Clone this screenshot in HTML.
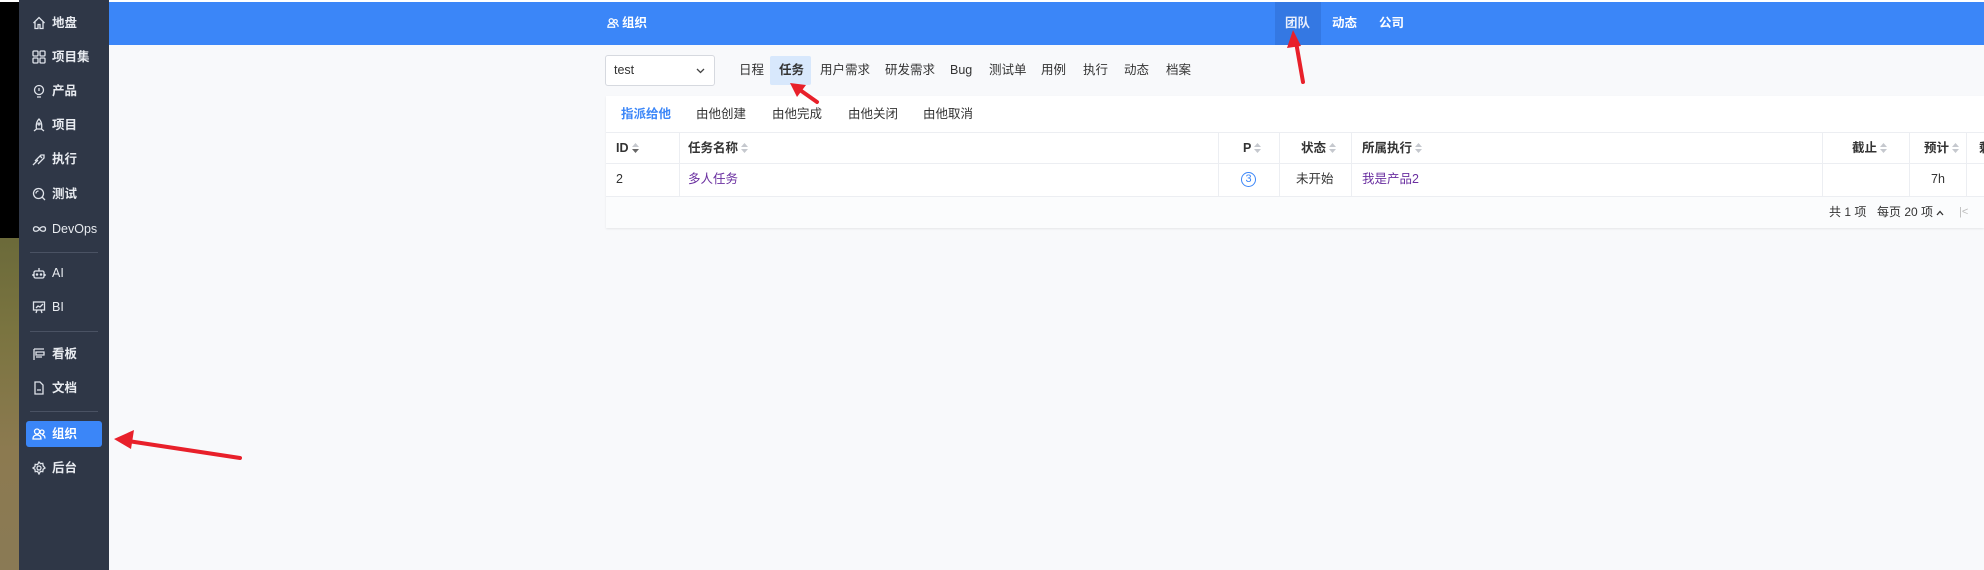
<!DOCTYPE html>
<html><head><meta charset="utf-8"><style>
*{margin:0;padding:0;box-sizing:border-box}
body{width:1984px;height:570px;overflow:hidden;position:relative;background:#f8f9fb;font-family:"Liberation Sans","Noto Sans CJK SC",sans-serif;font-size:13px;line-height:16px;color:#333}
.a{position:absolute;white-space:nowrap;line-height:16px}
#left{left:0;top:0;width:19px;height:570px;background:linear-gradient(180deg,#000 0,#000 238px,#6b6a3a 238px,#7a7440 330px,#8c7a50 450px,#8a7a55 570px)}
#side{left:19px;top:0;width:90px;height:570px;background:#2f3747}
.si{position:absolute;left:0;width:90px;height:26px;color:#e8ebf0;font-weight:bold;font-size:12.5px;line-height:26px;padding-left:33px}
.si svg{position:absolute;left:13px;top:6px}
.dv{position:absolute;left:11px;width:68px;height:1px;background:#4a5263}
#hdr{left:109px;top:2px;width:1875px;height:43px;background:#3b86f8}
.hw{color:#fff;font-weight:bold;font-size:12.5px}
.tab{font-size:12.5px;color:#333}
.th{font-weight:bold;font-size:12.5px;color:#333}
.vl{position:absolute;top:132px;height:64px;width:1px;background:#eceef2}
.sort{display:inline-block;width:7px;margin-left:3px;vertical-align:-1px}
</style></head><body>
<div class="a" id="left"></div>
<div class="a" style="left:0;top:0;width:1984px;height:2px;background:#fff"></div>
<div class="a" id="side">
 <div class="si" style="top:10px"><svg width="14" height="14" viewBox="0 0 14 14" fill="none" stroke="#dfe3ea" stroke-width="1.3"><path d="M1.5 7L7 1.5 12.5 7M3 6v6.5h3v-4h2v4h3V6"/></svg>地盘</div>
 <div class="si" style="top:44px"><svg width="14" height="14" viewBox="0 0 14 14" fill="none" stroke="#dfe3ea" stroke-width="1.3"><rect x="1" y="1" width="5" height="5" rx="1"/><rect x="8" y="1" width="5" height="5" rx="1"/><rect x="1" y="8" width="5" height="5" rx="1"/><rect x="8" y="8" width="5" height="5" rx="1"/></svg>项目集</div>
 <div class="si" style="top:78px"><svg width="14" height="14" viewBox="0 0 14 14" fill="none" stroke="#dfe3ea" stroke-width="1.3"><circle cx="7" cy="6" r="4.5"/><path d="M5 13h4M7 4v3"/></svg>产品</div>
 <div class="si" style="top:112px"><svg width="14" height="14" viewBox="0 0 14 14" fill="none" stroke="#dfe3ea" stroke-width="1.3"><path d="M7 1C4 4 4 8 4.5 11h5C10 8 10 4 7 1zM4.5 11L2 13M9.5 11L12 13"/><circle cx="7" cy="6" r="1"/></svg>项目</div>
 <div class="si" style="top:146px"><svg width="14" height="14" viewBox="0 0 14 14" fill="none" stroke="#dfe3ea" stroke-width="1.3"><path d="M1 13l5-5M3 9l6-6 3 0 0 3-6 6M8 4l2 2"/></svg>执行</div>
 <div class="si" style="top:181px"><svg width="14" height="14" viewBox="0 0 14 14" fill="none" stroke="#dfe3ea" stroke-width="1.3"><circle cx="6.5" cy="6.5" r="5"/><path d="M10 10l3 3M4 6.5a2.5 2.5 0 0 1 2.5-2.5"/></svg>测试</div>
 <div class="si" style="top:216px;font-weight:normal"><svg width="15" height="14" viewBox="0 0 15 14" fill="none" stroke="#dfe3ea" stroke-width="1.3"><path d="M7.5 7c-2-3-6-3-6 0s4 3 6 0 6-3 6 0-4 3-6 0z"/></svg>DevOps</div>
 <div class="dv" style="top:252px"></div>
 <div class="si" style="top:260px;font-weight:normal"><svg width="14" height="14" viewBox="0 0 14 14" fill="none" stroke="#dfe3ea" stroke-width="1.3"><rect x="2" y="5" width="10" height="7" rx="1.5"/><path d="M7 5V2M1 8v2M13 8v2"/><circle cx="5" cy="8.5" r=".6"/><circle cx="9" cy="8.5" r=".6"/></svg>AI</div>
 <div class="si" style="top:294px;font-weight:normal"><svg width="14" height="14" viewBox="0 0 14 14" fill="none" stroke="#dfe3ea" stroke-width="1.3"><rect x="1.5" y="2" width="11" height="8"/><path d="M4 8l2-2 2 1 3-3M5 10l-1 3M9 10l1 3"/></svg>BI</div>
 <div class="dv" style="top:331px"></div>
 <div class="si" style="top:341px"><svg width="14" height="14" viewBox="0 0 14 14" fill="none" stroke="#dfe3ea" stroke-width="1.3"><path d="M2 2h10M2 2v11M4 5h8v3H4zM4 10h6"/></svg>看板</div>
 <div class="si" style="top:375px"><svg width="14" height="14" viewBox="0 0 14 14" fill="none" stroke="#dfe3ea" stroke-width="1.3"><path d="M3 1h5l3 3v9H3zM5 9h4"/></svg>文档</div>
 <div class="dv" style="top:411px"></div>
 <div class="si" style="top:421px;left:7px;width:76px;background:#3b86f8;border-radius:3px;padding-left:26px;color:#fff"><svg style="left:6px" width="14" height="14" viewBox="0 0 14 14" fill="none" stroke="#fff" stroke-width="1.3"><circle cx="5" cy="4.5" r="2.5"/><circle cx="10" cy="5" r="2"/><path d="M1 12c0-3 2-4 4-4s4 1 4 4zM10 8c2 0 3 1 3 3.5"/></svg>组织</div>
 <div class="si" style="top:455px"><svg width="14" height="14" viewBox="0 0 14 14" fill="none" stroke="#dfe3ea" stroke-width="1.3"><circle cx="7" cy="7" r="2"/><path d="M7 1l1.5 1.7 2.3-.3.3 2.3L13 7l-1.9 1.3-.3 2.3-2.3-.3L7 13l-1.5-2.7-2.3.3-.3-2.3L1 7l1.9-1.3.3-2.3 2.3.3z"/></svg>后台</div>
</div>
<div class="a" id="hdr"></div>
<svg class="a" style="left:607px;top:17px" width="12" height="12" viewBox="0 0 14 14" fill="none" stroke="#fff" stroke-width="1.4"><circle cx="5" cy="4.5" r="2.5"/><circle cx="10" cy="5" r="2"/><path d="M1 12c0-3 2-4 4-4s4 1 4 4zM10 8c2 0 3 1 3 3.5"/></svg>
<div class="a hw" style="left:622px;top:15px">组织</div>
<div class="a" style="left:1275px;top:2px;width:46px;height:43px;background:#3478e3"></div>
<div class="a hw" style="left:1285px;top:15px;color:#e8eefc">团队</div>
<div class="a hw" style="left:1332px;top:15px">动态</div>
<div class="a hw" style="left:1379px;top:15px">公司</div>

<div class="a" style="left:605px;top:55px;width:110px;height:31px;background:#fff;border:1px solid #d6d9df;border-radius:3px"></div>
<div class="a tab" style="left:614px;top:62px">test</div>
<svg class="a" style="left:696px;top:68px" width="9" height="6" viewBox="0 0 9 6" fill="none" stroke="#444" stroke-width="1.3"><path d="M1 1l3.5 3.5L8 1"/></svg>
<div class="a tab" style="left:739px;top:62px">日程</div>
<div class="a" style="left:770px;top:56px;width:41px;height:29px;background:#d8e8fc;border-radius:2px"></div>
<div class="a tab" style="left:779px;top:62px;font-weight:bold">任务</div>
<div class="a tab" style="left:820px;top:62px">用户需求</div>
<div class="a tab" style="left:885px;top:62px">研发需求</div>
<div class="a tab" style="left:950px;top:62px">Bug</div>
<div class="a tab" style="left:989px;top:62px">测试单</div>
<div class="a tab" style="left:1041px;top:62px">用例</div>
<div class="a tab" style="left:1083px;top:62px">执行</div>
<div class="a tab" style="left:1124px;top:62px">动态</div>
<div class="a tab" style="left:1166px;top:62px">档案</div>

<div class="a" style="left:606px;top:96px;width:1378px;height:132px;background:#fff;box-shadow:0 1px 2px rgba(0,0,0,.08)"></div>
<div class="a tab" style="left:621px;top:106px;color:#3b86f8;font-weight:bold">指派给他</div>
<div class="a tab" style="left:696px;top:106px">由他创建</div>
<div class="a tab" style="left:772px;top:106px">由他完成</div>
<div class="a tab" style="left:848px;top:106px">由他关闭</div>
<div class="a tab" style="left:923px;top:106px">由他取消</div>
<div class="a" style="left:606px;top:132px;width:1378px;height:1px;background:#eceef2"></div>
<div class="a" style="left:606px;top:163px;width:1378px;height:1px;background:#eceef2"></div>
<div class="a" style="left:606px;top:196px;width:1378px;height:1px;background:#eceef2"></div>
<div class="a" style="left:606px;top:197px;width:1378px;height:31px;background:#fbfcfd"></div>
<div class="vl" style="left:679px"></div><div class="vl" style="left:1218px"></div><div class="vl" style="left:1279px"></div><div class="vl" style="left:1351px"></div><div class="vl" style="left:1822px"></div><div class="vl" style="left:1909px"></div><div class="vl" style="left:1966px"></div>
<div class="a th" style="left:616px;top:140px">ID<svg class="sort" width="7" height="10" viewBox="0 0 7 10"><path d="M0 4L3.5 0 7 4z" fill="#c5c8ce"/><path d="M0 6h7L3.5 10z" fill="#666"/></svg></div>
<div class="a th" style="left:688px;top:140px">任务名称<svg class="sort" width="7" height="10" viewBox="0 0 7 10"><path d="M0 4L3.5 0 7 4zM0 6h7L3.5 10z" fill="#c5c8ce"/></svg></div>
<div class="a th" style="left:1243px;top:140px">P<svg class="sort" width="7" height="10" viewBox="0 0 7 10"><path d="M0 4L3.5 0 7 4zM0 6h7L3.5 10z" fill="#c5c8ce"/></svg></div>
<div class="a th" style="left:1301px;top:140px">状态<svg class="sort" width="7" height="10" viewBox="0 0 7 10"><path d="M0 4L3.5 0 7 4zM0 6h7L3.5 10z" fill="#c5c8ce"/></svg></div>
<div class="a th" style="left:1362px;top:140px">所属执行<svg class="sort" width="7" height="10" viewBox="0 0 7 10"><path d="M0 4L3.5 0 7 4zM0 6h7L3.5 10z" fill="#c5c8ce"/></svg></div>
<div class="a th" style="left:1852px;top:140px">截止<svg class="sort" width="7" height="10" viewBox="0 0 7 10"><path d="M0 4L3.5 0 7 4zM0 6h7L3.5 10z" fill="#c5c8ce"/></svg></div>
<div class="a th" style="left:1924px;top:140px">预计<svg class="sort" width="7" height="10" viewBox="0 0 7 10"><path d="M0 4L3.5 0 7 4zM0 6h7L3.5 10z" fill="#c5c8ce"/></svg></div>
<div class="a th" style="left:1979px;top:140px">剩</div>
<div class="a tab" style="left:616px;top:171px">2</div>
<div class="a tab" style="left:688px;top:171px;color:#6a2fa0">多人任务</div>
<div class="a" style="left:1241px;top:172px;width:15px;height:15px;border:1px solid #3b86f8;border-radius:50%;color:#3b86f8;font-size:11px;line-height:13px;text-align:center">3</div>
<div class="a tab" style="left:1296px;top:171px">未开始</div>
<div class="a tab" style="left:1362px;top:171px;color:#6a2fa0">我是产品2</div>
<div class="a tab" style="left:1931px;top:171px">7h</div>
<div class="a tab" style="left:1829px;top:204px;font-size:12px">共 1 项</div>
<div class="a tab" style="left:1877px;top:204px;font-size:12px">每页 20 项</div>
<svg class="a" style="left:1936px;top:210px" width="8" height="6" viewBox="0 0 8 6" fill="none" stroke="#333" stroke-width="1.3"><path d="M1 5l3-3.5L7 5"/></svg>
<div class="a" style="left:1959px;top:204px;color:#bbb;font-size:11px">|&lt;</div>

<svg class="a" style="left:0;top:0" width="1984" height="570" fill="#e8202a">
 <line x1="240" y1="458" x2="128" y2="441" stroke="#e8202a" stroke-width="4" stroke-linecap="round"/>
 <path d="M114 439l20-9-3 19z"/>
 <line x1="817" y1="102" x2="800" y2="90" stroke="#e8202a" stroke-width="4" stroke-linecap="round"/>
 <path d="M790 83l16 2-9 12z"/>
 <line x1="1303" y1="82" x2="1296" y2="42" stroke="#e8202a" stroke-width="4" stroke-linecap="round"/>
 <path d="M1293 30l8 16-14 2z"/>
</svg>
</body></html>
